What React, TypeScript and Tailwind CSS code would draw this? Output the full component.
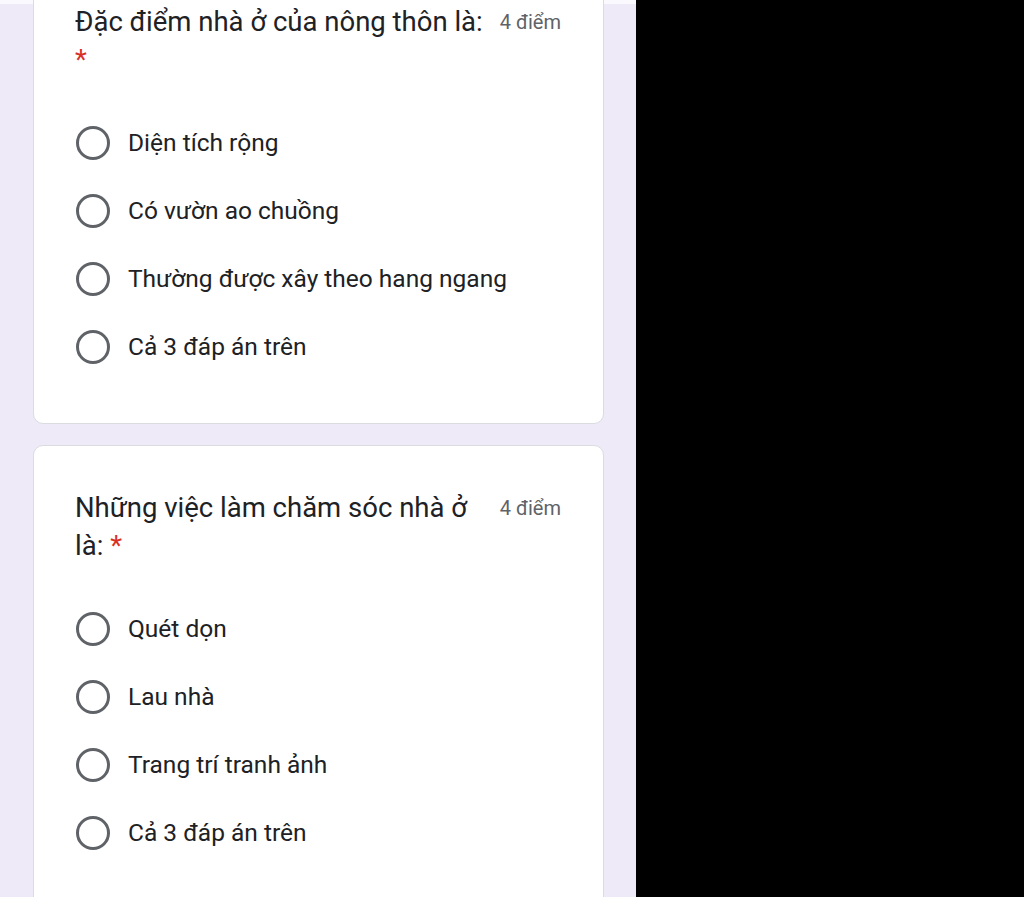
const questions = [
  {
    title: 'Đặc điểm nhà ở của nông thôn là:',
    options: ['Diện tích rộng', 'Có vườn ao chuồng', 'Thường được xây theo hang ngang', 'Cả 3 đáp án trên'],
  },
  {
    title: 'Những việc làm chăm sóc nhà ở là:',
    options: ['Quét dọn', 'Lau nhà', 'Trang trí tranh ảnh', 'Cả 3 đáp án trên'],
  },
];

function Radio() {
  return <span className="block w-[34px] h-[34px] rounded-full border-[3px] border-[#5f6368] shrink-0" />;
}

function QuestionCard({ title, options }: { title: string; options: string[] }) {
  return (
    <div className="bg-white border border-[#dadce0] rounded-[10px] pt-[43px] pb-[42px] pl-[41px] pr-[42px]">
      <div className="flex items-start">
        <div className="w-[416px] text-[27.5px] leading-[38px] text-[#202124]">
          {title} <span className="text-[#d93025]">*</span>
        </div>
        <div className="ml-auto text-[20px] leading-[38px] text-[#5f6368] whitespace-nowrap">4 điểm</div>
      </div>
      <div className="mt-[30px] flex flex-col">
        {options.map((o) => (
          <label key={o} className="h-[68px] flex items-center gap-[18px] pl-[1px]">
            <Radio />
            <span className="text-[24.5px] text-[#202124]">{o}</span>
          </label>
        ))}
      </div>
    </div>
  );
}

export default function App() {
  return (
    <div className="w-[1024px] h-[897px] overflow-hidden flex bg-black" style={{ fontFamily: 'Roboto, "Noto Sans", sans-serif' }}>
      <div className="w-[636px] h-full bg-[#eeeaf8] overflow-hidden">
        <div className="h-[4px] bg-white/70" />
        <div className="-mt-[45px] px-[33px] pr-[32px] flex flex-col gap-[21px]">
          {questions.map((q) => (
            <QuestionCard key={q.title} title={q.title} options={q.options} />
          ))}
        </div>
      </div>
    </div>
  );
}
